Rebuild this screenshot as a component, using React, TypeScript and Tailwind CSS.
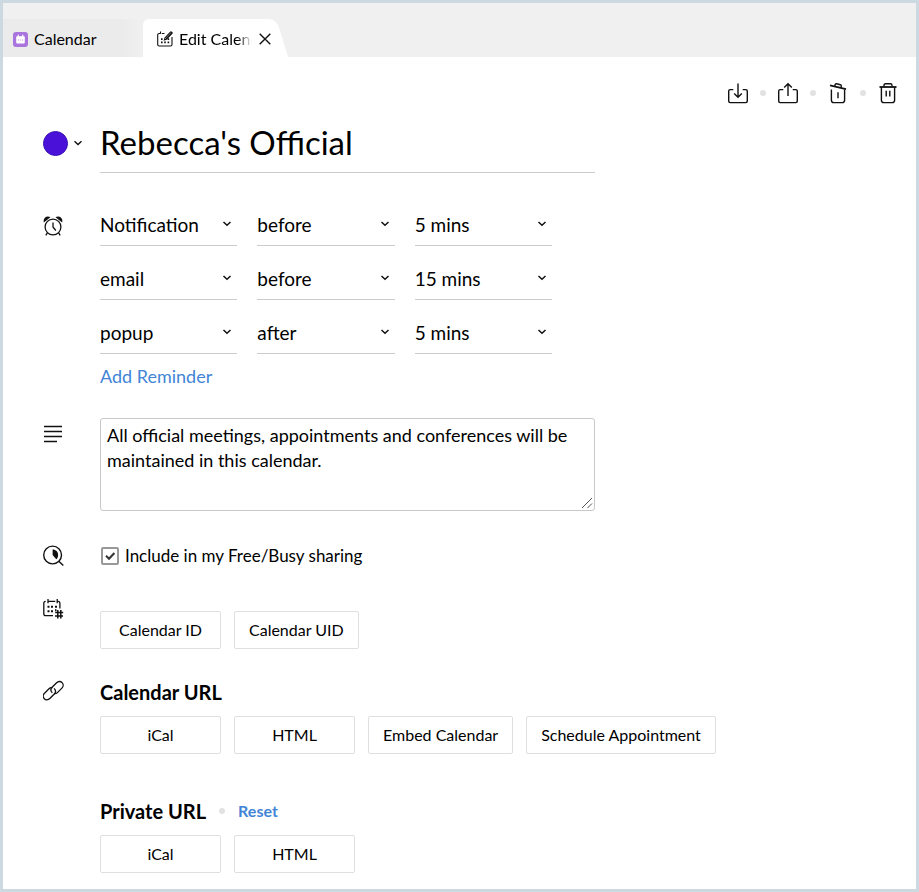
import React, { useState } from 'react';

interface Reminder {
  id: number;
  type: string;
  when: string;
  time: string;
}

const initialReminders: Reminder[] = [
  { id: 1, type: 'Notification', when: 'before', time: '5 mins' },
  { id: 2, type: 'email', when: 'before', time: '15 mins' },
  { id: 3, type: 'popup', when: 'after', time: '5 mins' },
];

interface SelectFieldProps {
  label: string;
  value: string;
  options: string[];
  onChange: (value: string) => void;
}

function SelectField({ label, value, options, onChange }: SelectFieldProps) {
  return (
    <div className="relative">
      <select
        aria-label={label}
        value={value}
        onChange={(e) => onChange(e.target.value)}
        className="block h-[41px] w-full appearance-none border-b border-[#cccccc] bg-transparent pr-6 text-[19px] text-black outline-none"
      >
        {options.map((option) => (
          <option key={option}>{option}</option>
        ))}
      </select>
      <svg className="pointer-events-none absolute top-[15px] right-1 h-2 w-3" viewBox="0 0 12 8" fill="none" stroke="#111" strokeWidth="1.5">
        <path d="M2.5 2 L6 5.3 L9.5 2" />
      </svg>
    </div>
  );
}

function OutlineButton({ children }: { children: React.ReactNode }) {
  return (
    <button
      type="button"
      className="h-[38px] min-w-[121px] rounded-xs border border-[#dfdfdf] bg-white px-[14px] text-base text-black hover:bg-gray-50"
    >
      {children}
    </button>
  );
}

interface SectionProps {
  icon: React.ReactNode;
  className?: string;
  children: React.ReactNode;
}

function Section({ icon, className, children }: SectionProps) {
  return (
    <section className={`flex items-start ${className ?? ''}`}>
      <div className="w-[57px] shrink-0">{icon}</div>
      <div className="min-w-0 flex-1">{children}</div>
    </section>
  );
}

function Dot() {
  return <span className="h-[6px] w-[6px] shrink-0 rounded-full bg-[#e2e2e2]" />;
}

const iconProps = {
  fill: 'none',
  stroke: '#111',
  strokeWidth: 1.4,
};

function CalendarAppIcon() {
  return (
    <svg className="h-[15px] w-[15px]" viewBox="0 0 15 15">
      <rect width="15" height="15" rx="3" fill="#a974de" />
      <rect x="3.2" y="4.2" width="8.6" height="7.3" rx="1" fill="#fff" />
      <path d="M5.3 2.8v2.4M9.7 2.8v2.4" stroke="#fff" strokeWidth="1.2" />
      <path d="M5 8h1.2M7 8h1.2M9 8h1.2" stroke="#c9a6ec" strokeWidth="1" />
    </svg>
  );
}

function EditCalendarIcon() {
  return (
    <svg className="h-4 w-4" viewBox="0 0 16 16" {...iconProps} strokeWidth="1.1">
      <path d="M7.5 2.5H4.8M3.5 0.5v2.2M3.5 2.5H2.2C1.2 2.5 0.7 3 0.7 4v9.5c0 1 .5 1.5 1.5 1.5h11.3c1 0 1.5-.5 1.5-1.5V6" />
      <path d="M9 7.8 L14.6 1.8 M8 6.8 L13.4 1.1 C14 .5 15.6 1.6 15 2.5 L9.4 8.3 L7.4 9 Z" />
      <path d="M4 8.2h1.6M4 11.4h1.6M7.2 11.4h1.6M10.6 8.2h1.6M10.6 11.4h1.6" strokeWidth="1.8" />
    </svg>
  );
}

function ImportIcon() {
  return (
    <svg className="h-[22px] w-[22px]" viewBox="0 0 22 22" {...iconProps}>
      <path d="M6.3 7.6H3.2C2.2 7.6 1.7 8.1 1.7 9.1v10c0 1 .5 1.5 1.5 1.5h15.6c1 0 1.5-.5 1.5-1.5v-10c0-1-.5-1.5-1.5-1.5h-3.1" />
      <path d="M11 1.5v13.5M7.2 11.6 11 15.3l3.8-3.7" />
    </svg>
  );
}

function ExportIcon() {
  return (
    <svg className="h-[22px] w-[22px]" viewBox="0 0 22 22" {...iconProps}>
      <path d="M6.3 7.6H3.2C2.2 7.6 1.7 8.1 1.7 9.1v10c0 1 .5 1.5 1.5 1.5h15.6c1 0 1.5-.5 1.5-1.5v-10c0-1-.5-1.5-1.5-1.5h-3.1" />
      <path d="M11 14V1.8M7.2 5.5 11 1.8l3.8 3.7" />
    </svg>
  );
}

function EmptyIcon() {
  return (
    <svg className="h-[22px] w-[22px]" viewBox="0 0 22 22" {...iconProps}>
      <path d="M3 3.3 19 7.2" strokeWidth="1.7" />
      <path d="M7.7 4 8.3 2.4C8.6 1.8 9 1.7 9.6 1.8l3.8.9c.7.2 1 .6.9 1.2l-.2 1.7" />
      <path d="M4.4 7.4v10.8c0 1.6.8 2.4 2.4 2.4h8.4c1.6 0 2.4-.8 2.4-2.4V7.4" />
      <path d="M11 10.3v6" />
    </svg>
  );
}

function DeleteIcon() {
  return (
    <svg className="h-[22px] w-[22px]" viewBox="0 0 22 22" {...iconProps}>
      <path d="M2.5 5h17" strokeWidth="1.8" />
      <path d="M7 4.7V3.4c0-1 .5-1.6 1.5-1.6h5c1 0 1.5.6 1.5 1.6v1.3" />
      <path d="M4.4 5v13.2c0 1.6.8 2.4 2.4 2.4h8.4c1.6 0 2.4-.8 2.4-2.4V5" />
      <path d="M9.2 8.7v5.8M12.8 8.7v5.8" />
    </svg>
  );
}

function AlarmIcon() {
  return (
    <svg className="h-5 w-5" viewBox="0 0 20 20" {...iconProps} strokeWidth="1.3">
      <circle cx="10" cy="11" r="7.9" />
      <path d="M10 6.5V11l2.8 3.5M4.4 16.8 2.8 19.3M15.6 16.8l1.6 2.5" />
      <path d="M1.3 5.2C1 2.5 3.3.5 6.1 1.4ZM18.7 5.2C19 2.5 16.7.5 13.9 1.4Z" fill="#111" />
    </svg>
  );
}

function DescriptionIcon() {
  return (
    <svg className="h-[18px] w-5" viewBox="0 0 20 18" {...iconProps}>
      <path d="M1 1.5h18M1 6.5h18M1 11.5h18M1 16.5h13" />
    </svg>
  );
}

function FreeBusyIcon() {
  return (
    <svg className="h-[22px] w-[22px]" viewBox="0 0 22 22" {...iconProps}>
      <circle cx="9.6" cy="10" r="8.9" />
      <path d="M15.8 16.3 20.3 20.6" />
      <path d="M9.6 4.5c3.2 0 5.5 2.3 5.5 5.5 0 2-.6 3.2-1.8 4.2L9.6 10Z" fill="#111" stroke="none" />
    </svg>
  );
}

function CalendarIdIcon() {
  return (
    <svg className="h-[22px] w-[22px]" viewBox="0 0 22 22" {...iconProps} strokeWidth="1.3">
      <path d="M2.7 3.3C1.5 3.3.8 4 .8 5.2v10.6c0 1.3.7 1.9 1.9 1.9h7.3M5 1v4.2M5 3.3h7.3M14.2 1v4.2M14.2 3.3h.8c1.2 0 1.9.7 1.9 1.9v5.3" />
      <path d="M8 8.8h2M12 8.8h2M4.5 13.2h2M8 13.2h2M4.5 8.8h2M12 12.2h1.5" strokeWidth="2" />
      <path d="M14.8 12v8.4M17.8 12v8.4M12.2 14.5h8M12 18h8" strokeWidth="1.5" />
    </svg>
  );
}

function LinkIcon() {
  return (
    <svg className="h-[22px] w-[22px]" viewBox="0 0 22 22" {...iconProps} strokeWidth="1.3">
      <path d="M9.3 12.9C7.5 11 7.5 8.9 9.1 7.3l4.5-4.5c1.7-1.7 4.1-1.7 5.5-.2s1.5 3.9-.2 5.5l-4.5 4.5c-1 1-2.2 1.3-3.4 1" />
      <path d="M11.1 8.4c1.8 1.9 1.8 4 .2 5.6l-4.5 4.5c-1.7 1.7-4.1 1.7-5.5.2s-1.5-3.9.2-5.5L6 8.7c1-1 2.2-1.3 3.4-1" />
    </svg>
  );
}

export default function App() {
  const [title, setTitle] = useState("Rebecca's Official");
  const [reminders, setReminders] = useState(initialReminders);
  const [description, setDescription] = useState(
    'All official meetings, appointments and conferences will be maintained in this calendar.'
  );
  const [freeBusy, setFreeBusy] = useState(true);

  const updateReminder = (id: number, field: keyof Reminder, value: string) => {
    setReminders(reminders.map((r) => (r.id === id ? { ...r, [field]: value } : r)));
  };

  const addReminder = () => {
    setReminders([...reminders, { id: reminders.length + 1, type: 'Notification', when: 'before', time: '5 mins' }]);
  };

  return (
    <div className="min-h-screen border-3 border-[#cdd9e0] bg-white font-['Lato',sans-serif] text-black">
      {/* Tabs */}
      <header className="flex bg-[#f0f0f0] pt-4">
        <button type="button" className="flex h-[38px] w-[140px] items-center gap-[6px] rounded-tr-lg bg-linear-to-r from-[#ebebeb] from-85% to-[#f0f0f0] pt-[2px] pl-[10px] text-base">
          <CalendarAppIcon />
          Calendar
        </button>
        <div className="relative isolate flex h-[38px] w-[145px] items-center pt-[2px] pl-[14px]">
          <div className="absolute inset-y-0 right-5 left-0 -z-10 rounded-tl-md bg-white" />
          <div className="absolute inset-y-0 right-0 -z-10 w-12 origin-bottom-right skew-x-[17deg] rounded-tr-lg bg-white" />
          <button type="button" className="flex items-center gap-[6px] text-base">
            <EditCalendarIcon />
            <span className="w-[73px] overflow-hidden mask-r-from-80% mask-r-to-100% text-left whitespace-nowrap">Edit Calendar</span>
          </button>
          <button type="button" aria-label="Close tab" className="ml-[7px]">
            <svg className="h-3 w-3" viewBox="0 0 12 12" {...iconProps}>
              <path d="M.7.7 11.3 11.3M11.3.7.7 11.3" />
            </svg>
          </button>
        </div>
      </header>

      <main className="pt-[25px] pr-[17px] pb-4 pl-10">
        {/* Calendar actions */}
        <div className="flex items-center justify-end gap-[11px]">
          <button type="button" aria-label="Import"><ImportIcon /></button>
          <Dot />
          <button type="button" aria-label="Export"><ExportIcon /></button>
          <Dot />
          <button type="button" aria-label="Empty calendar"><EmptyIcon /></button>
          <Dot />
          <button type="button" aria-label="Delete calendar"><DeleteIcon /></button>
        </div>

        <div className="mt-[9px] flex items-center">
          <button type="button" aria-label="Calendar color" className="flex w-[57px] shrink-0 items-center gap-1">
            <span className="h-[25px] w-[25px] rounded-full border border-[#3d0fb8] bg-[#4a12d8]" />
            <svg className="h-2 w-3" viewBox="0 0 12 8" {...iconProps}>
              <path d="M2.5 2.3 L6 5.6 L9.5 2.3" />
            </svg>
          </button>
          <input
            aria-label="Calendar name"
            value={title}
            onChange={(e) => setTitle(e.target.value)}
            className="h-[60px] w-full max-w-[495px] border-b border-[#cccccc] pb-[2px] text-[33px] outline-none"
          />
        </div>

        <Section icon={<div className="pt-[11px]"><AlarmIcon /></div>} className="mt-8">
          <div className="grid max-w-[452px] gap-[13px]">
            {reminders.map((r) => (
              <div key={r.id} className="grid grid-cols-3 gap-5">
                <SelectField
                  label="Reminder type"
                  value={r.type}
                  options={['Notification', 'email', 'popup']}
                  onChange={(v) => updateReminder(r.id, 'type', v)}
                />
                <SelectField
                  label="Before or after"
                  value={r.when}
                  options={['before', 'after']}
                  onChange={(v) => updateReminder(r.id, 'when', v)}
                />
                <SelectField
                  label="Time"
                  value={r.time}
                  options={['5 mins', '15 mins', '30 mins']}
                  onChange={(v) => updateReminder(r.id, 'time', v)}
                />
              </div>
            ))}
          </div>
          <button type="button" onClick={addReminder} className="mt-[10px] block text-lg leading-6 text-[#4285d6] hover:underline">
            Add Reminder
          </button>
        </Section>

        <Section icon={<div className="pt-[7px]"><DescriptionIcon /></div>} className="mt-[30px]">
          <div className="relative max-w-[495px]">
            <textarea
              aria-label="Description"
              value={description}
              onChange={(e) => setDescription(e.target.value)}
              className="block h-[93px] w-full resize-y rounded-[3px] border border-[#c8c8c8] px-[6px] py-1 text-lg leading-[25px] outline-none [&::-webkit-resizer]:bg-transparent"
            />
            <svg className="pointer-events-none absolute right-[2px] bottom-[2px] h-3 w-3" viewBox="0 0 12 12" fill="none" stroke="#555">
              <path d="M1 11 11 1M6.5 11 11 6.5" />
            </svg>
          </div>
        </Section>

        <Section icon={<div className="pt-px"><FreeBusyIcon /></div>} className="mt-[33px]">
          <label className="flex items-center gap-[6px] text-[17px] leading-6">
            <span className="relative ml-px flex">
              <input
                type="checkbox"
                checked={freeBusy}
                onChange={(e) => setFreeBusy(e.target.checked)}
                className="peer h-[18px] w-[18px] appearance-none rounded-xs border-2 border-[#999999] bg-white"
              />
              <svg
                className="pointer-events-none absolute inset-0 hidden h-[18px] w-[18px] peer-checked:block"
                viewBox="0 0 18 18"
                fill="none"
                stroke="#333"
                strokeWidth="2"
              >
                <path d="M5 8.8 8 11.8 13.4 6" />
              </svg>
            </span>
            Include in my Free/Busy sharing
          </label>
        </Section>

        <Section icon={<CalendarIdIcon />} className="mt-[30px]">
          <div className="flex flex-wrap gap-[13px] pt-[13px]">
            <OutlineButton>Calendar ID</OutlineButton>
            <OutlineButton>Calendar UID</OutlineButton>
          </div>
        </Section>

        <Section icon={<LinkIcon />} className="mt-[31px]">
          <h2 className="text-xl leading-6 font-bold">Calendar URL</h2>
          <div className="mt-3 flex flex-wrap gap-[13px]">
            <OutlineButton>iCal</OutlineButton>
            <OutlineButton>HTML</OutlineButton>
            <OutlineButton>Embed Calendar</OutlineButton>
            <OutlineButton>Schedule Appointment</OutlineButton>
          </div>

          <div className="mt-[45px] flex items-center gap-[13px]">
            <h2 className="text-xl leading-6 font-bold">Private URL</h2>
            <Dot />
            <button type="button" className="text-base leading-6 font-bold text-[#4285d6] hover:underline">
              Reset
            </button>
          </div>
          <div className="mt-3 flex flex-wrap gap-[13px]">
            <OutlineButton>iCal</OutlineButton>
            <OutlineButton>HTML</OutlineButton>
          </div>
        </Section>
      </main>
    </div>
  );
}
